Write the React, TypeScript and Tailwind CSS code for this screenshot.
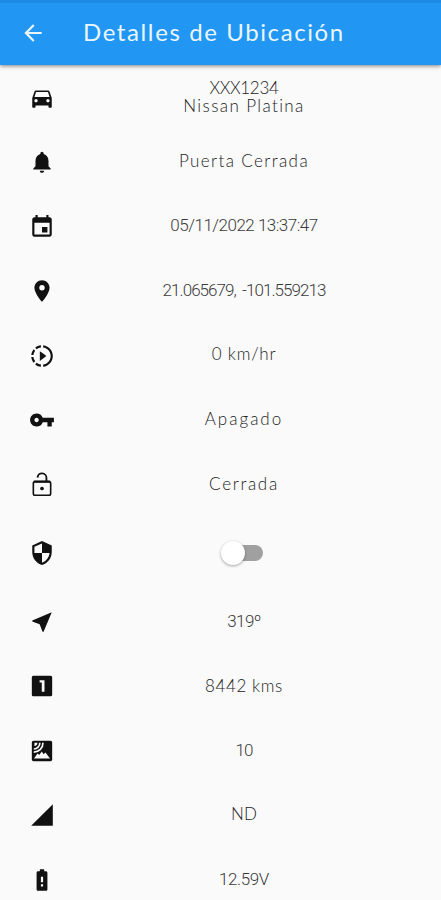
import React, { useState } from 'react';
import {
  MdArrowBack,
  MdBatteryAlert,
  MdDirectionsCar,
  MdEvent,
  MdLocationOn,
  MdNearMe,
  MdNotifications,
  MdSecurity,
  MdSignalCellular4Bar,
  MdSlowMotionVideo,
  MdVpnKey,
} from 'react-icons/md';

interface IconProps {
  className?: string;
}

const UnlockedIcon: React.FC<IconProps> = ({ className }) => (
  <svg viewBox="0 0 24 24" className={className} fill="none" stroke="currentColor">
    <rect x="4" y="8.9" width="16" height="12.6" rx="1.6" strokeWidth="1.5" />
    <path d="M4.5 8.9h15" strokeWidth="2" />
    <path d="M7.9 5.2a4.1 4.1 0 0 1 8.2 .3v3.4" strokeWidth="1.7" />
    <circle cx="12" cy="15.2" r="1.7" fill="currentColor" stroke="none" />
  </svg>
);

const OdometerIcon: React.FC<IconProps> = ({ className }) => (
  <svg viewBox="0 0 24 24" className={className} fill="currentColor">
    <path
      fillRule="evenodd"
      d="M4 2.6h16a1.4 1.4 0 0 1 1.4 1.4v16a1.4 1.4 0 0 1-1.4 1.4H4A1.4 1.4 0 0 1 2.6 20V4A1.4 1.4 0 0 1 4 2.6zM14.3 17.4V6.6H9.8v2.2h2v8.6z"
    />
  </svg>
);

const SatelliteIcon: React.FC<IconProps> = ({ className }) => (
  <svg viewBox="0 0 24 24" className={className}>
    <rect x="2.6" y="2.6" width="18.8" height="18.8" rx="1.6" fill="currentColor" />
    <path d="M5 4.4h2.8A2.9 2.9 0 0 1 5 7.3z" fill="#fafafa" />
    <path d="M4.4 10.1a5.5 5.5 0 0 0 5.6-5.7M4.4 13a8.4 8.4 0 0 0 8.5-8.6" fill="none" stroke="#fafafa" strokeWidth="1.5" />
    <path d="M4.6 18.9l3.3-4.5 1.5 1.2 2.4-3.2 1.7 2.7 1.7-1.8 4.2 5.6z" fill="#fafafa" />
  </svg>
);

interface DetailRowProps {
  icon: React.ComponentType<IconProps>;
  height?: string;
  children: React.ReactNode;
}

const DetailRow: React.FC<DetailRowProps> = ({ icon: Icon, height = 'h-[64.5px]', children }) => {
  return (
    <li className={`flex shrink-0 items-center ${height}`}>
      <div className="flex w-[83px] shrink-0 justify-center pt-px">
        <Icon className="h-[26px] w-[26px] text-[#111111]" />
      </div>
      <div className="flex w-[322px] justify-center text-center text-[17px] leading-[18px] font-light text-[#222222]">
        {children}
      </div>
    </li>
  );
};

const Switch: React.FC = () => {
  const [on, setOn] = useState(false);

  return (
    <button
      type="button"
      role="switch"
      aria-checked={on}
      aria-label="Seguridad"
      onClick={() => setOn(!on)}
      className="mr-[4px] flex h-[26px] w-[43px] items-center"
    >
      <span className={`ml-[4px] flex h-[16px] w-[38px] items-center rounded-full ${on ? 'justify-end bg-[#90caf9]' : 'bg-[#a0a0a0]'}`}>
        <span className="-ml-[4px] h-[24px] w-[24px] shrink-0 rounded-full bg-white shadow-[0_1px_3px_rgba(0,0,0,0.35)]" />
      </span>
    </button>
  );
};

export default function App() {
  return (
    <div className="flex h-[900px] w-[441px] flex-col overflow-hidden bg-[#fafafa] font-['Lato',sans-serif]">
      <header className="z-10 flex h-[65px] shrink-0 items-center border-t-[3px] border-[#1e88e5] bg-[#2196f3] pb-[2px] pl-[20px] text-[#eaf6ff] shadow-[0_1px_4px_rgba(0,0,0,0.5)]">
        <button type="button" aria-label="Regresar">
          <MdArrowBack className="h-[26px] w-[26px]" />
        </button>
        <h1 className="-mt-[2px] ml-[37px] text-[24px] leading-[30px] tracking-[1.6px]">Detalles de Ubicación</h1>
      </header>

      <ul className="flex flex-col">
        <DetailRow icon={MdDirectionsCar}>
          <div className="flex flex-col items-center">
            <span className="tracking-[-0.3px]">XXX1234</span>
            <span className="tracking-[1.4px]">Nissan Platina</span>
          </div>
        </DetailRow>
        <DetailRow icon={MdNotifications}>
          <span className="-mt-[2px] tracking-[1.4px]">Puerta Cerrada</span>
        </DetailRow>
        <DetailRow icon={MdEvent}>
          <span className="-mt-[3px] font-['Roboto',sans-serif] tracking-[-0.5px] text-[#3a3a3a]">05/11/2022 13:37:47</span>
        </DetailRow>
        <DetailRow icon={MdLocationOn}>
          <span className="-mt-[2px] font-['Roboto',sans-serif] tracking-[-0.95px] text-[#3a3a3a] [word-spacing:3px]">21.065679, -101.559213</span>
        </DetailRow>
        <DetailRow icon={MdSlowMotionVideo}>
          <span className="-mt-[2px] tracking-[0.8px]">0 km/hr</span>
        </DetailRow>
        <DetailRow icon={MdVpnKey}>
          <span className="-mt-[2px] tracking-[2px]">Apagado</span>
        </DetailRow>
        <DetailRow icon={UnlockedIcon}>
          <span className="-mt-px tracking-[1.7px]">Cerrada</span>
        </DetailRow>
        <DetailRow icon={MdSecurity} height="h-[72.5px]">
          <Switch />
        </DetailRow>
        <DetailRow icon={MdNearMe}>
          <span className="-mt-px font-['Roboto',sans-serif] tracking-[-0.6px] text-[#3a3a3a]">319º</span>
        </DetailRow>
        <DetailRow icon={OdometerIcon}>
          <span className="tracking-[0.6px]">8442 kms</span>
        </DetailRow>
        <DetailRow icon={SatelliteIcon}>
          <span className="-mt-px font-['Roboto',sans-serif] tracking-[-1px] text-[#3a3a3a]">10</span>
        </DetailRow>
        <DetailRow icon={MdSignalCellular4Bar}>
          <span className="-mt-px">ND</span>
        </DetailRow>
        <DetailRow icon={MdBatteryAlert}>
          <span className="-mt-px font-['Roboto',sans-serif] tracking-[-0.4px] text-[#3a3a3a]">12.59V</span>
        </DetailRow>
      </ul>
    </div>
  );
}
